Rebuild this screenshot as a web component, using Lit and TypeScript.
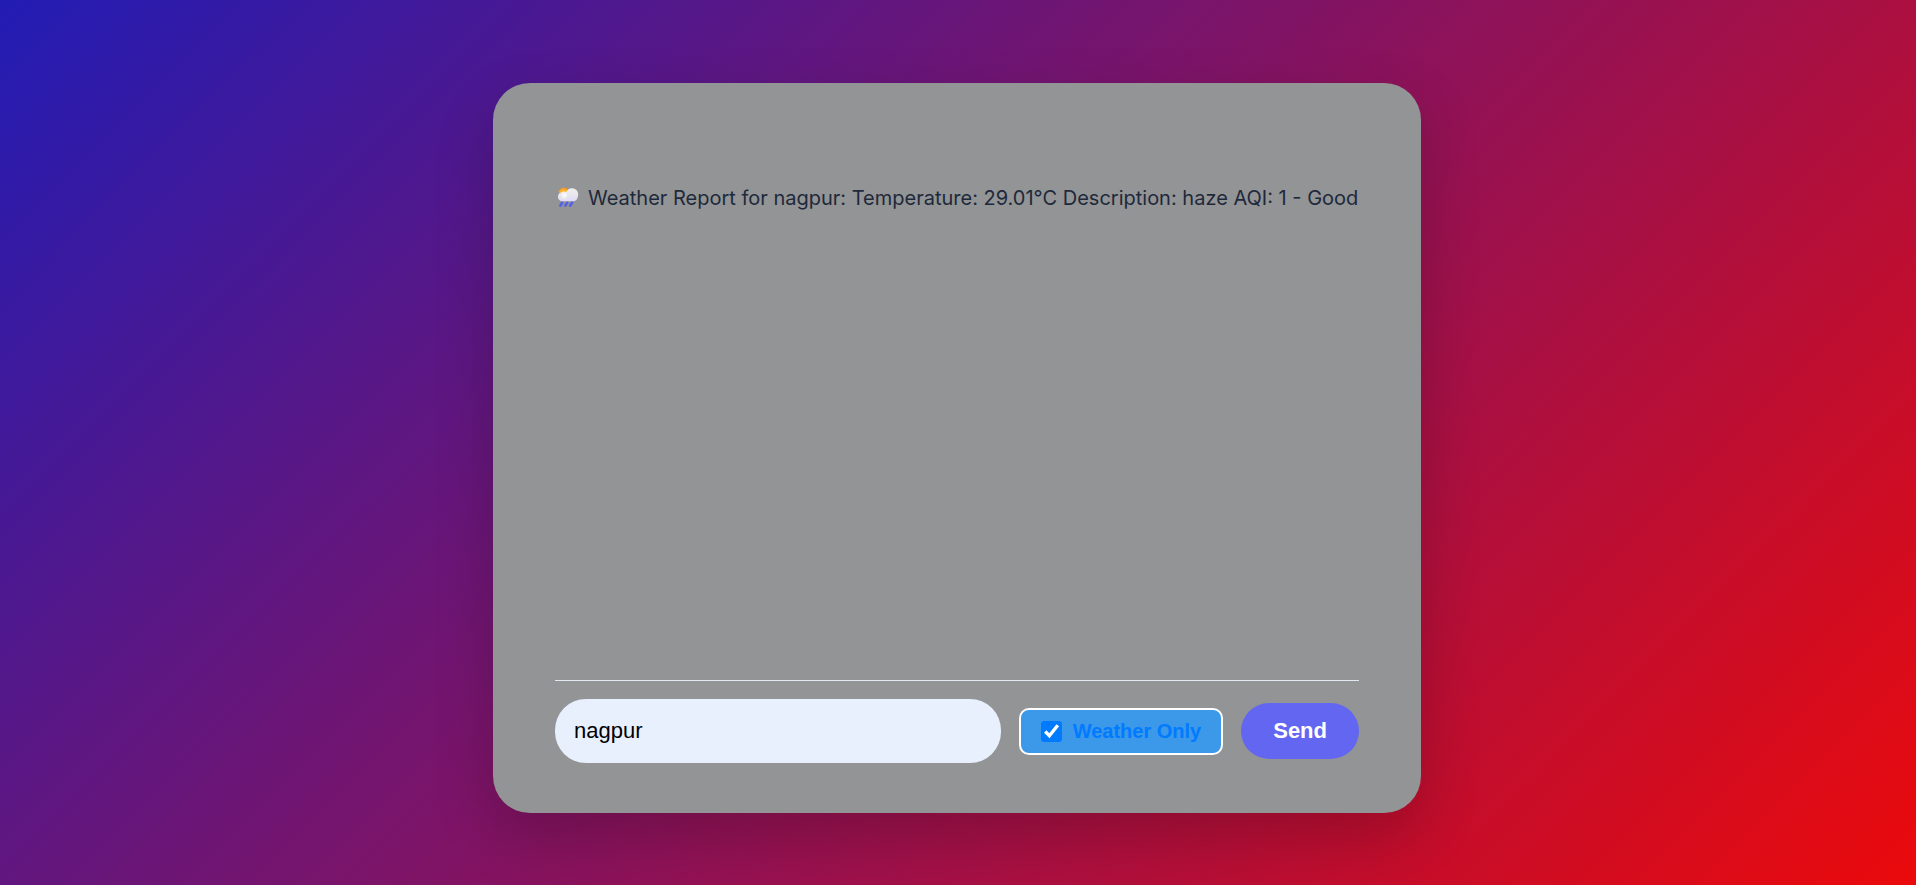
import { LitElement, html, css, svg } from "lit";
import { customElement, state } from "lit/decorators.js";

const weatherIcon = svg`
  <defs>
    <linearGradient id="cloud" x1="0" y1="0" x2="0" y2="1">
      <stop offset="0" stop-color="#eeeeee" />
      <stop offset="0.5" stop-color="#e8e7ec" />
      <stop offset="1" stop-color="#e0d8fb" />
    </linearGradient>
    <radialGradient id="sun" cx="0.5" cy="0.6" r="0.6">
      <stop offset="0" stop-color="#ffd63c" />
      <stop offset="1" stop-color="#f08a24" />
    </radialGradient>
    <radialGradient id="puff" cx="0.6" cy="0.4" r="0.6">
      <stop offset="0" stop-color="#ffffff" />
      <stop offset="1" stop-color="#e2e1e8" />
    </radialGradient>
  </defs>
  <path d="M5.600 0 7 1.200 9 1.100 9.600 3 11 4.800 6 9 0.900 7.600 1.200 5.600 0.200 4 2 3.200 2.400 1.400 4.200 1.500Z" fill="url(#sun)" />
  <path d="M4.600 14.200A4.500 4.500 0 0 1 4.200 5.200 5 5 0 0 1 8.200 5 6.200 6.200 0 0 1 14 1.200a6 6 0 0 1 6.200 6.200q0 6.800-6.200 6.800Z" fill="url(#cloud)" />
  <circle cx="5.600" cy="8.800" r="4" fill="url(#puff)" />
  <path d="M4.200 15.800 2.400 18.600M9.200 15.800 7.400 18.600M14 15.800 12.200 18.600" stroke="#5560ea" stroke-width="2.600" stroke-linecap="round" />
`;

@customElement("app-root")
export class AppRoot extends LitElement {
  static styles = css`
    :host {
      box-sizing: border-box;
      display: flex;
      justify-content: center;
      min-height: 100vh;
      padding: 83px 26px 72px 24px;
      background: linear-gradient(135deg, #221cb4, #eb0a0b);
      font-family: Inter, "Liberation Sans", sans-serif;
    }
    .card {
      box-sizing: border-box;
      display: flex;
      flex-direction: column;
      width: 100%;
      max-width: 928px;
      padding: 100px 62px 50px;
      border-radius: 37px;
      background: #939495;
      box-shadow: 0 24px 60px rgba(0, 0, 0, 0.2);
    }
    .messages {
      flex: 1;
    }
    .report {
      display: flex;
      margin: 0;
      padding-left: 3px;
      gap: 9px;
      font-size: 20px;
      line-height: 30px;
      color: #1e293b;
    }
    .icon {
      flex: none;
      width: 21px;
      height: 20px;
      margin-top: 4px;
    }
    .composer {
      display: flex;
      align-items: center;
      gap: 18px;
      padding-top: 18px;
      border-top: 1px solid #e2e8f0;
      font-family: "Liberation Sans", Arial, sans-serif;
    }
    .city {
      box-sizing: border-box;
      flex: 1;
      min-width: 0;
      height: 64px;
      padding: 0 19px;
      border: 0;
      border-radius: 31px;
      background: #e8f0fe;
      color: #000;
      font-family: inherit;
      font-size: 22px;
    }
    .toggle {
      box-sizing: border-box;
      display: flex;
      align-items: center;
      gap: 11px;
      height: 47px;
      padding: 0 20px;
      border: 2px solid #fff;
      border-radius: 10px;
      background: #3c98e8;
      color: #007bff;
      font-size: 20px;
      font-weight: 700;
      white-space: nowrap;
      cursor: pointer;
    }
    .check {
      width: 21px;
      height: 21px;
      margin: 0;
      accent-color: #007bff;
    }
    .send {
      height: 56px;
      padding: 0 32px;
      border: 0;
      border-radius: 28px;
      background: #6366f1;
      color: #fff;
      font-family: inherit;
      font-size: 22px;
      font-weight: 700;
      cursor: pointer;
    }
  `;

  @state() private city = "nagpur";
  @state() private weatherOnly = true;
  @state() private reportCity = "nagpur";

  private submit(event: Event) {
    event.preventDefault();
    this.reportCity = this.city;
  }

  render() {
    const report = `Weather Report for ${this.reportCity}: Temperature: 29.01°C Description: haze AQI: 1 - Good`;
    return html`
      <main class="card">
        <section class="messages" aria-live="polite">
          <p class="report">
            <svg class="icon" viewBox="0 0 21 20" aria-hidden="true">${weatherIcon}</svg>
            <span>${report}</span>
          </p>
        </section>
        <form class="composer" @submit=${this.submit}>
          <input
            class="city"
            type="text"
            aria-label="City"
            .value=${this.city}
            @input=${(e: Event) => (this.city = (e.target as HTMLInputElement).value)}
          />
          <label class="toggle">
            <input
              class="check"
              type="checkbox"
              .checked=${this.weatherOnly}
              @change=${(e: Event) => (this.weatherOnly = (e.target as HTMLInputElement).checked)}
            />
            Weather Only
          </label>
          <button class="send" type="submit">Send</button>
        </form>
      </main>
    `;
  }
}
